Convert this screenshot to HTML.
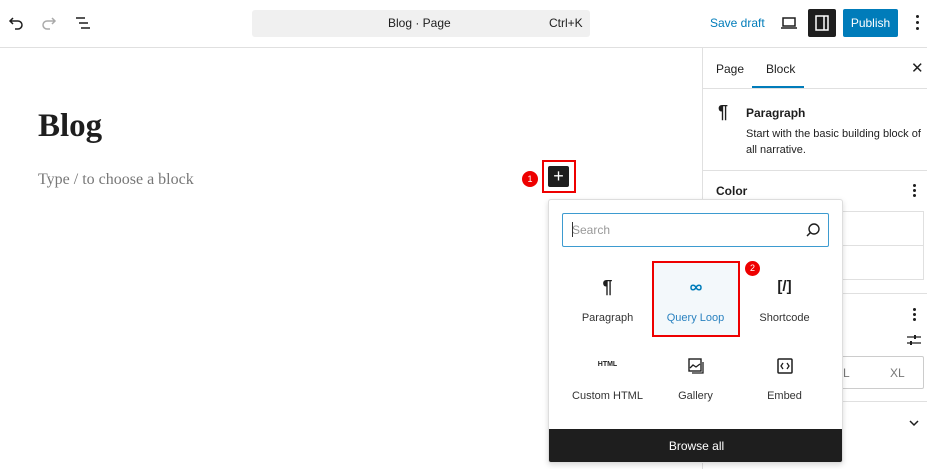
<!DOCTYPE html>
<html><head><style>
*{margin:0;padding:0;box-sizing:border-box}
body{width:927px;height:469px;overflow:hidden;background:#fff;font-family:"Liberation Sans",sans-serif;color:#1e1e1e;position:relative}
.a{position:absolute}
</style></head><body>
<div class="a" style="left:0;top:0;width:927px;height:48px;border-bottom:1px solid #e0e0e0"></div>
<svg class="a" style="left:6px;top:13px" width="20" height="20" viewBox="0 0 20 20"><path d="M4 8h8a4 4 0 0 1 0 8H9M7 5L4 8l3 3" fill="none" stroke="#1e1e1e" stroke-width="1.5"/></svg>
<svg class="a" style="left:39px;top:13px" width="20" height="20" viewBox="0 0 20 20"><path d="M16 8H8a4 4 0 0 0 0 8h3M13 5l3 3-3 3" fill="none" stroke="#aaa" stroke-width="1.5"/></svg>
<svg class="a" style="left:73px;top:13px" width="20" height="20" viewBox="0 0 20 20"><path d="M3 5h9M6 10h9M8 15h9" stroke="#1e1e1e" stroke-width="1.5"/></svg>
<div class="a" style="left:252px;top:10px;width:338px;height:27px;background:#f0f0f0;border-radius:3px;font-size:12px;line-height:27px"><span class="a" style="left:136px">Blog · Page</span><span class="a" style="left:297px">Ctrl+K</span></div>
<div class="a" style="left:710px;top:16px;font-size:12px;color:#007cba">Save draft</div>
<svg class="a" style="left:779px;top:13px" width="20" height="20" viewBox="0 0 20 20"><path d="M4 5h12v8H4zM2 15h16" fill="none" stroke="#1e1e1e" stroke-width="1.5"/></svg>
<div class="a" style="left:808px;top:9px;width:28px;height:28px;background:#1e1e1e;border-radius:2px"><svg width="28" height="28"><rect x="8" y="7" width="12" height="14" fill="none" stroke="#fff" stroke-width="1.5"/><path d="M16 7v14" stroke="#fff" stroke-width="1.5"/></svg></div>
<div class="a" style="left:843px;top:9px;width:55px;height:28px;background:#007cba;border-radius:2px;color:#fff;font-size:12px;line-height:28px;text-align:center">Publish</div>
<div class="a" style="left:916px;top:15px;width:3px;height:3px;background:#1e1e1e;border-radius:50%;box-shadow:0 6px #1e1e1e,0 12px #1e1e1e"></div>
<div class="a" style="left:38px;top:108px;font-family:'Liberation Serif',serif;font-weight:bold;font-size:33px">Blog</div>
<div class="a" style="left:38px;top:171px;font-family:'Liberation Serif',serif;font-size:16px;color:#777">Type / to choose a block</div>
<div class="a" style="left:522px;top:171px;width:16px;height:16px;border-radius:50%;background:#e00;color:#fff;font-size:9px;text-align:center;line-height:16px">1</div>
<div class="a" style="left:542px;top:160px;width:34px;height:33px;border:2px solid #e00"></div>
<div class="a" style="left:548px;top:166px;width:21px;height:21px;background:#1e1e1e;border-radius:2px;color:#fff;font-size:18px;line-height:20px;text-align:center">+</div>
<div class="a" style="left:702px;top:48px;width:1px;height:421px;background:#e0e0e0"></div>
<div class="a" style="left:716px;top:62px;font-size:12px">Page</div>
<div class="a" style="left:766px;top:62px;font-size:12px">Block</div>
<div class="a" style="left:752px;top:86px;width:52px;height:2px;background:#007cba"></div>
<div class="a" style="left:911px;top:59px;font-size:15px">✕</div>
<div class="a" style="left:703px;top:88px;width:224px;height:1px;background:#e0e0e0"></div>
<div class="a" style="left:718px;top:102px;font-size:18px;font-weight:bold">¶</div>
<div class="a" style="left:746px;top:106px;font-size:12px;font-weight:bold">Paragraph</div>
<div class="a" style="left:746px;top:126px;font-size:11px;line-height:16px;width:185px">Start with the basic building block of all narrative.</div>
<div class="a" style="left:703px;top:170px;width:224px;height:1px;background:#e0e0e0"></div>
<div class="a" style="left:716px;top:184px;font-size:12px;font-weight:bold">Color</div>
<div class="a" style="left:913px;top:184px;width:3px;height:3px;background:#1e1e1e;border-radius:50%;box-shadow:0 5px #1e1e1e,0 10px #1e1e1e"></div>
<div class="a" style="left:716px;top:211px;width:208px;height:69px;border:1px solid #e0e0e0"></div>
<div class="a" style="left:716px;top:245px;width:208px;height:1px;background:#e0e0e0"></div>
<div class="a" style="left:703px;top:293px;width:224px;height:1px;background:#e0e0e0"></div>
<div class="a" style="left:913px;top:308px;width:3px;height:3px;background:#1e1e1e;border-radius:50%;box-shadow:0 5px #1e1e1e,0 10px #1e1e1e"></div>
<svg class="a" style="left:906px;top:333px" width="16" height="14"><path d="M1 4h14M1 10h14" stroke="#1e1e1e" stroke-width="1.3"/><rect x="8" y="2" width="2" height="4" fill="#1e1e1e"/><rect x="4" y="8" width="2" height="4" fill="#1e1e1e"/></svg>
<div class="a" style="left:716px;top:356px;width:208px;height:33px;border:1px solid #ccc;border-radius:2px"></div>
<div class="a" style="left:843px;top:366px;font-size:12px;color:#777">L</div>
<div class="a" style="left:890px;top:366px;font-size:12px;color:#777">XL</div>
<div class="a" style="left:703px;top:401px;width:224px;height:1px;background:#e0e0e0"></div>
<svg class="a" style="left:908px;top:419px" width="12" height="8"><path d="M2 2l4 4 4-4" fill="none" stroke="#1e1e1e" stroke-width="1.5"/></svg>
<div class="a" style="left:548px;top:199px;width:295px;height:264px;background:#fff;border:1px solid #ddd;border-radius:3px;box-shadow:0 2px 6px rgba(0,0,0,.15);overflow:hidden">
 <div class="a" style="left:13px;top:13px;width:267px;height:34px;border:1.5px solid #3d9bd0;border-radius:2px;background:#fff"><span class="a" style="left:9px;top:9px;font-size:12px;color:#999">Search</span><span class="a" style="left:9px;top:8px;width:1px;height:15px;background:#333"></span>
 <svg class="a" style="left:242px;top:8px" width="16" height="16"><circle cx="9" cy="7" r="5" fill="none" stroke="#1e1e1e" stroke-width="1.4"/><path d="M5.5 10.5L2 14" stroke="#1e1e1e" stroke-width="1.5"/></svg></div>
 <div class="a" style="left:103px;top:61px;width:88px;height:76px;background:#f3f8fb;border:2px solid #e00"></div>
 <div class="a" style="left:196px;top:61px;width:15px;height:15px;border-radius:50%;background:#e00;color:#fff;font-size:9px;text-align:center;line-height:15px">2</div>
 <div class="a" style="left:0;top:77px;width:117px;text-align:center;font-size:18px;font-weight:bold">¶</div>
 <div class="a" style="left:0;top:112px;width:117px;text-align:center;font-size:11px;color:#333">Paragraph</div>
 <svg class="a" style="left:140px;top:83px" width="14" height="9"><path d="M7 4.5C5.5 1.5 2 1.5 2 4.5s3.5 3 5 0 5-3 5 0-3.5 3-5 0" fill="none" stroke="#007cba" stroke-width="1.5"/></svg>
 <div class="a" style="left:88px;top:112px;width:117px;text-align:center;font-size:11px;color:#2a82c0">Query Loop</div>
 <div class="a" style="left:177px;top:78px;width:117px;text-align:center;font-size:15px;font-weight:bold">[/]</div>
 <div class="a" style="left:177px;top:112px;width:117px;text-align:center;font-size:11px;color:#333">Shortcode</div>
 <div class="a" style="left:0;top:161px;width:117px;text-align:center;font-size:7px;font-weight:bold">HTML</div>
 <div class="a" style="left:0;top:190px;width:117px;text-align:center;font-size:11px;color:#333">Custom HTML</div>
 <svg class="a" style="left:138px;top:157px" width="18" height="18"><rect x="2" y="2" width="12" height="12" fill="none" stroke="#1e1e1e" stroke-width="1.4"/><path d="M16 5v11H5M3 11l3-3 3 2 4-3" fill="none" stroke="#1e1e1e" stroke-width="1.3"/></svg>
 <div class="a" style="left:88px;top:190px;width:117px;text-align:center;font-size:11px;color:#333">Gallery</div>
 <svg class="a" style="left:227px;top:157px" width="18" height="18"><rect x="2" y="2" width="14" height="14" rx="1" fill="none" stroke="#1e1e1e" stroke-width="1.5"/><path d="M7 6L5 9l2 3M11 6l2 3-2 3" fill="none" stroke="#1e1e1e" stroke-width="1.3"/></svg>
 <div class="a" style="left:177px;top:190px;width:117px;text-align:center;font-size:11px;color:#333">Embed</div>
 <div class="a" style="left:0;top:229px;width:295px;height:35px;background:#1e1e1e;color:#fff;font-size:12px;text-align:center;line-height:35px">Browse all</div>
</div>
</body></html>
